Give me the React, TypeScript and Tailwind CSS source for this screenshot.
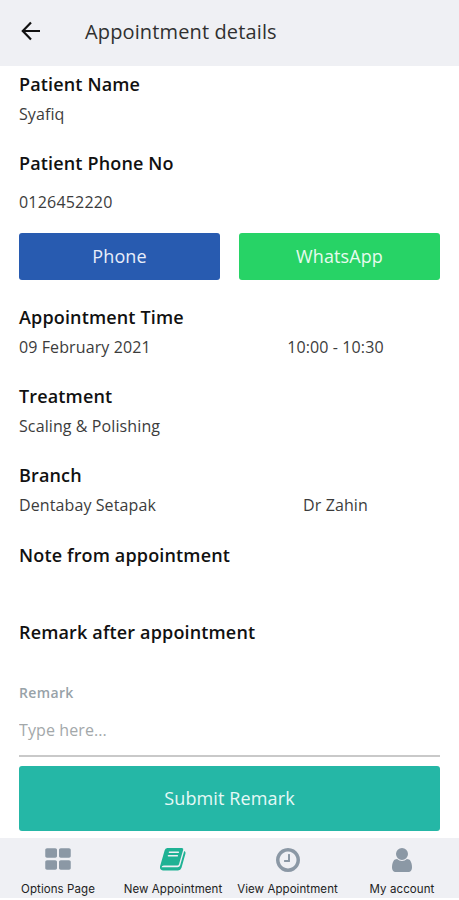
import type { ReactNode } from 'react'

const GRID_PATH =
  'M832 1024v384q0 52-30 82t-82 30h-528q-52 0-82-30t-30-82v-384q0-52 30-82t82-30h528q52 0 82 30t30 82zm0-768v384q0 52-30 82t-82 30h-528q-52 0-82-30t-30-82v-384q0-52 30-82t82-30h528q52 0 82 30t30 82zm880 768v384q0 52-30 82t-82 30h-528q-52 0-82-30t-30-82v-384q0-52 30-82t82-30h528q52 0 82 30t30 82zm0-768v384q0 52-30 82t-82 30h-528q-52 0-82-30t-30-82v-384q0-52 30-82t82-30h528q52 0 82 30t30 82z'

const CLOCK_PATH =
  'M1024 544v448q0 14-9 23t-23 9h-320q-14 0-23-9t-9-23v-64q0-14 9-23t23-9h224v-352q0-14 9-23t23-9h64q14 0 23 9t9 23zm416 352q0-148-73-273t-198-198-273-73-273 73-198 198-73 273 73 273 198 198 273 73 273-73 198-198 73-273zm224 0q0 209-103 385.5t-279.5 279.5-385.5 103-385.5-103-279.5-279.5-103-385.5 103-385.5 279.5-279.5 385.5-103 385.5 103 279.5 279.5 103 385.5z'

const USER_PATH =
  'M1536 1399q0 109-62.5 187t-150.5 78h-854q-88 0-150.5-78t-62.5-187q0-85 8.5-160.5t31.5-152 58.5-131 94-89 134.5-34.5q131 128 313 128t313-128q76 0 134.5 34.5t94 89 58.5 131 31.5 152 8.5 160.5zm-256-887q0 159-112.5 271.5t-271.5 112.5-271.5-112.5-112.5-271.5 112.5-271.5 271.5-112.5 271.5 112.5 112.5 271.5z'

function NavIcon({ path }: { path: string }) {
  return (
    <svg width="28" height="28" viewBox="0 0 1792 1792" className="fill-[#8b98a5]">
      <path d={path} />
    </svg>
  )
}

function BookIcon() {
  return (
    <svg width="28" height="28" viewBox="0 0 28 28" fill="none" strokeLinecap="round" strokeLinejoin="round">
      <path
        d="M8.2 2H22.8Q24.7 2 24.2 3.8L20 18.2Q19.6 19.4 18.2 19.4H4.8Q2.8 19.4 2.6 21.3H18.6Q20.5 21.3 21.1 19.5L25.2 5Q27 5.6 26.5 7.4L22.5 21.8Q21.7 24.4 19 24.4H4Q.6 24.4 1 20.6L5.6 4.5Q6.2 2 8.2 2Z"
        fill="#1fb294"
      />
      <path d="M10.4 6.3H19.4M9.4 9.7H18.4" stroke="#eff0f4" strokeWidth="1.4" />
    </svg>
  )
}

const NAV_ITEMS = [
  { label: 'Options Page', width: 'w-[116px]', icon: <NavIcon path={GRID_PATH} /> },
  { label: 'New Appointment', width: 'w-[114px]', icon: <BookIcon /> },
  { label: 'View Appointment', width: 'w-[115px]', icon: <NavIcon path={CLOCK_PATH} /> },
  { label: 'My account', width: 'w-[114px]', icon: <NavIcon path={USER_PATH} /> },
]

function Title({ children }: { children: ReactNode }) {
  return <h2 className="text-[18px] leading-[30px] font-semibold tracking-[0.15px] text-[#111]">{children}</h2>
}

function Section({ title, value, extra }: { title: string; value: string; extra?: string }) {
  return (
    <section>
      <Title>{title}</Title>
      <div className="flex text-[16px] leading-[30px] tracking-[0.1px] text-[#3c3c3c]">
        <p className="w-[212px]">{value}</p>
        {extra && <p className="flex-1 text-center">{extra}</p>}
      </div>
    </section>
  )
}

export default function App() {
  return (
    <div className="flex h-[900px] w-[459px] flex-col overflow-hidden bg-white font-['Open_Sans','Noto_Sans',sans-serif]">
      {/* Header */}
      <header className="flex h-[66px] shrink-0 items-center bg-[#eff0f4] pl-[21px]">
        <button aria-label="Back">
          <svg width="20" height="20" viewBox="0 0 20 20" fill="none" stroke="#111" strokeWidth="2.2" className="-mt-1">
            <path d="M10 1.5 1.8 10l8.2 8.5M1.8 10H19" />
          </svg>
        </button>
        <h1 className="-mt-[2px] ml-[44px] text-[20px] leading-[30px] tracking-[0.13px] text-[#303030]">
          Appointment details
        </h1>
      </header>

      <main className="flex-1 px-[19px] pt-[3px]">
        <Section title="Patient Name" value="Syafiq" />

        <section className="mt-[19px]">
          <Title>Patient Phone No</Title>
          <p className="mt-[9px] text-[16px] leading-[30px] tracking-[0.2px] text-[#3c3c3c]">0126452220</p>
          <div className="mt-4 flex gap-[19px]">
            <button className="h-[47px] flex-1 rounded-[3px] bg-[#285bb0] text-[18px] tracking-[0.1px] text-[#e8eefa]">
              Phone
            </button>
            <button className="h-[47px] flex-1 rounded-[3px] bg-[#27d366] text-[18px] tracking-[0.1px] text-[#e8fbee]">
              WhatsApp
            </button>
          </div>
        </section>

        <div className="mt-[22px] flex flex-col gap-[19px]">
          <Section title="Appointment Time" value="09 February 2021" extra="10:00 - 10:30" />
          <Section title="Treatment" value="Scaling & Polishing" />
          <Section title="Branch" value="Dentabay Setapak" extra="Dr Zahin" />
        </div>

        <div className="mt-5 mb-[47px]">
          <Title>Note from appointment</Title>
        </div>
        <Title>Remark after appointment</Title>

        {/* Remark form */}
        <label className="mt-[31px] block border-b-2 border-[#c9c9c9]">
          <span className="block text-[14px] leading-[30px] font-semibold tracking-[0.35px] text-[#98a2a8]">Remark</span>
          <input
            placeholder="Type here..."
            className="mt-[7px] mb-[10px] block h-[30px] w-full text-[16px] tracking-[0.1px] outline-none placeholder:text-[#a3a8aa]"
          />
        </label>
        <button className="mt-[9px] h-[65px] w-full rounded-[3px] bg-[#25b7a6] text-[18px] tracking-[0.12px] text-[#e6f9f6]">
          Submit Remark
        </button>
      </main>

      {/* Bottom navigation */}
      <nav className="mb-[2px] flex h-[60px] shrink-0 bg-[#eff0f4]">
        {NAV_ITEMS.map((item) => (
          <button key={item.label} className={`flex flex-col items-center pt-2 ${item.width}`}>
            {item.icon}
            <span className="mt-[7px] font-['Inter',sans-serif] text-[11.5px] leading-4 tracking-[0.08px] whitespace-nowrap text-[#222]">
              {item.label}
            </span>
          </button>
        ))}
      </nav>
    </div>
  )
}
